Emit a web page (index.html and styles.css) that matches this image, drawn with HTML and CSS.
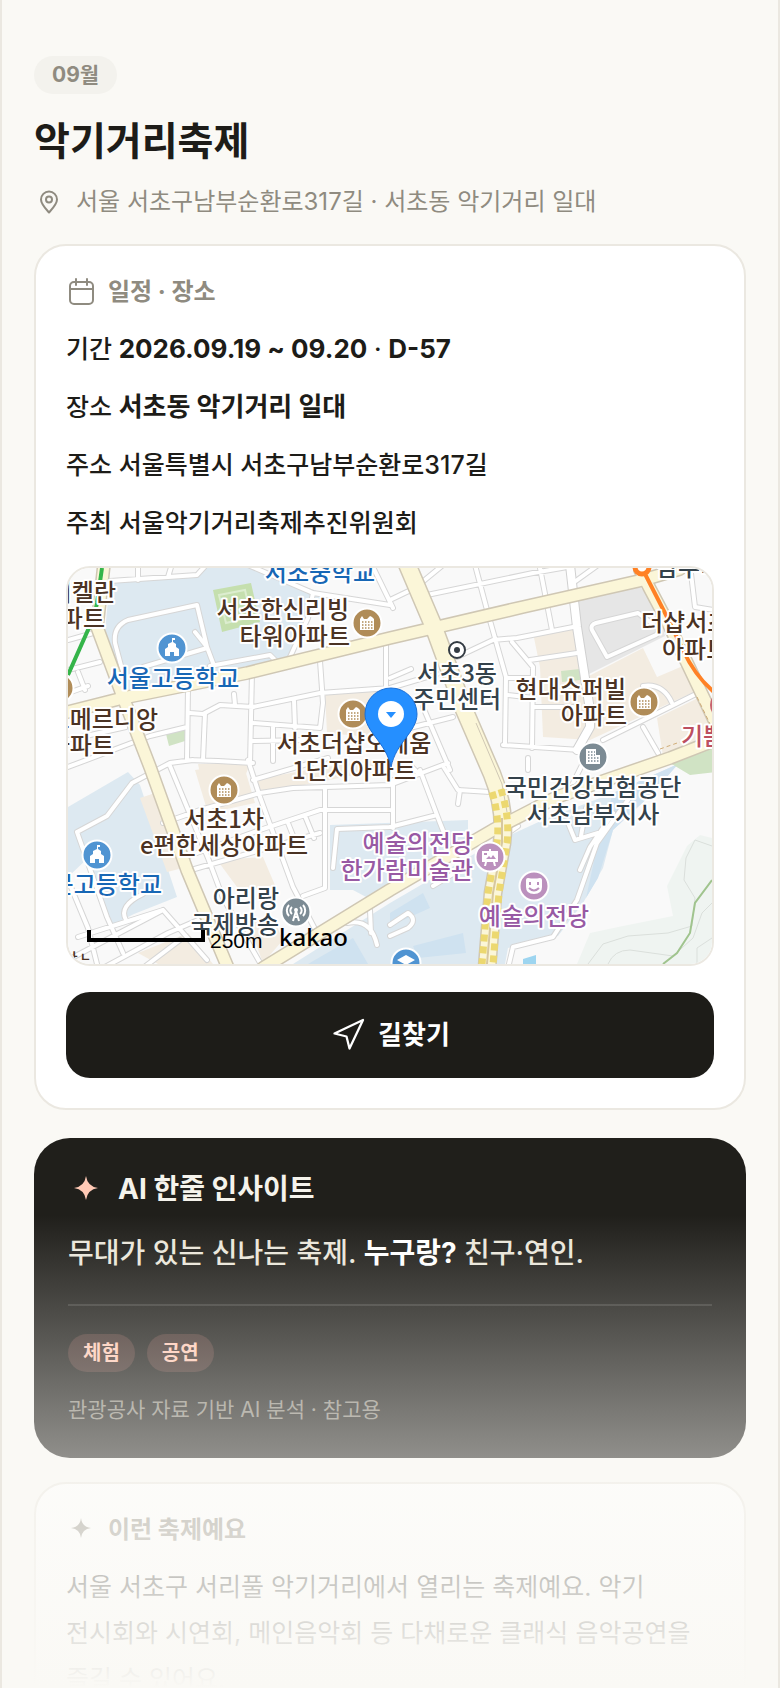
FILE: index.html
```html
<!DOCTYPE html>
<html lang="ko">
<head>
    <meta charset="UTF-8">
    <meta name="viewport" content="width=device-width, initial-scale=1">
    <title>악기거리축제</title>
    <link rel="stylesheet" href="styles.css">
</head>

<body>
    <main class="page">
        <header class="festival-header">
            <span class="month-chip">09월</span>
            <h1>악기거리축제</h1>
            <p class="address">
                <svg class="icon" viewBox="0 0 30 30" aria-hidden="true">
                    <path d="M15 25.500C11 21 7 17 7 12.500a8 8 0 0 1 16 0C23 17 19 21 15 25.500z"></path>
                    <circle cx="15" cy="12.500" r="3"></circle>
                </svg>
                서울 서초구남부순환로317길 · 서초동 악기거리 일대
            </p>
        </header>

        <section class="card">
            <h2 class="card-title">
                <svg class="icon" viewBox="0 0 30 30" aria-hidden="true">
                    <rect x="4" y="5" width="23" height="22" rx="4"></rect>
                    <path d="M4 12h23M10 2v6M21 2v6"></path>
                </svg>
                일정 · 장소
            </h2>
            <ul class="info-list">
                <li>기간 <b>2026.09.19 ~ 09.20</b> · <b>D-57</b></li>
                <li>장소 <b>서초동 악기거리 일대</b></li>
                <li>주소 서울특별시 서초구남부순환로317길</li>
                <li>주최 서울악기거리축제추진위원회</li>
            </ul>

            <div class="map">
                <svg viewBox="0 0 644 396" preserveAspectRatio="xMidYMid slice">
                    <defs>
                        <path id="lanes" d="M42 13L129 7L139-4M70 12V0M100 9L104-4M55 105L47 75Q45 58 60 52L129 37L139 79L145 95M75 99L139 80M127 64L139 79M142 98L202 87L207 92M180-3L245 25L322 37M222 89L240 50L245 25M304-3L325 40M0 72L29 64M0 102L32 94M10 104L17 122M0 125L20 118M120 120L119 192L150 193L185 195M184 104L182 196M252 93L255 135L252 160M122 145L135 146L152 137L185 139L252 125L322 120M137 145L135 192M166 126L167 137M185 155L252 160M185 173L240 172M226 132L227 160M205 158V193M318 72V120M0 199L82 168L119 159M0 172L58 159M9 264L39 248L64 215L102 195L125 192M9 264L39 349L55 385M0 312L20 360L30 400M10 369L95 342L139 392M58 352Q50 338 75 326M102 198L140 290L155 330L195 400M180 192L192 229L225 319L249 365M95 255L132 242L192 225L225 220L322 217M115 290L192 262L252 242L322 242M257 219V320L235 328M265 300L269 261L322 259M123 302L252 265M185 212L260 190M237 248L246 270M220 255L228 275M279 355Q303 350 309 377M302 342L303 365M35 400L100 365L130 352M75 400L112 372M0 392L95 342M322 32L347 20L375-3M359 27L465 5L505-2M407-3L419 42L438 109L437 175M472 0L484 62M389 89L425 72L449 70L505 59M444 74L465 99L464 180M462 92L509 85M440 110H465M440 127L466 130M435 177L512 182M467 139H505M535 172L632 124M575 159L590 185M524 62Q522 57 528 55L570 45L590 60Q592 64 588 67L539 89ZM322 110L343 101M322 120L369 106M322 165L385 149M355 139L382 202M604 135Q595 115 575 118M622-3L627 39L646 42M505 15L530-3M352 202L372 255L380 275M375 198L390 222L422 224M392 222L390 236M322 259L369 247M325 212V260M322 217L380 195M340 195L350 205M460 190V202M520 185L500 225M512 302L522 279L545 245M500 255L507 272L530 265M518 240L513 268M565 225L529 275L509 332L485 369L445 379L440 400M322 357L340 345Q350 352 340 360L322 368M365 318L395 300M440 265L450 258"></path>
                        <path id="wide-lane" d="M502-3L509 59L522 142L522 159L509 182"></path>
                        <path id="avenues" d="M36-4L29 59L55 129L82 199L119 302L160 400M0 144L55 130L179 105L322 70L455 39L575 12L612 1M195 400L322 322L425 262L489 229L602 190L648 172M572 2L600 55L650 160"></path>
                        <path id="boulevard" d="M339-4L365 57L395 139L424 206Q438 240 434 275L425 325L419 400"></path>
                        <g id="apartment">
                            <circle r="14.500" fill="#b08c58" stroke="#fff" stroke-width="2"></circle>
                            <path d="M-7 7V-4L-5-7L-3-4L0-4L3-7L5-6L7-4V7z" fill="#fff"></path>
                            <path d="M-5-1H6M-5 2H6M-5 5H6" stroke="#b08c58" stroke-width="1.500" stroke-dasharray="1.500 1.500"></path>
                        </g>
                        <g id="school">
                            <circle r="14.500" fill="#5094d2" stroke="#fff" stroke-width="2"></circle>
                            <path d="M-7 8V1L-4-1V-4L0-6V-10H3V-8H1V-6L4-4V-1L7 1V8H2V4H-2V8z" fill="#fff"></path>
                        </g>
                    </defs>

                    <rect width="644" height="396" fill="#f9f9f9"></rect>

                    <!-- blocks -->
                    <g fill="#dde9f1">
                        <path d="M42 12L129 6L139 0H182L255 25L222 88L180 102L65 128L53 122L37 64z"></path>
                        <path d="M0 239L60 204L72 217L109 329L66 346L42 358L20 290L0 309z"></path>
                        <path d="M262 257L400 252V280L300 330L285 322H262z"></path>
                        <path d="M225 396L322 335L425 275L475 252L545 225L610 196L585 225L545 262L535 300L515 335L490 368L440 380L437 396z"></path>
                    </g>
                    <g fill="#cfe2f0">
                        <path d="M322 345L355 325L362 340L322 358zM240 396L285 370L300 396zM345 378L395 365L398 385L350 390z"></path>
                        <path d="M545 225L610 196L585 225L545 262L530 310L518 330L530 275z"></path>
                    </g>
                    <g fill="#f3ece1">
                        <path d="M72 230L87 225L115 300L99 304zM127 202L175 195L187 235L140 245zM149 292L195 289L209 322L169 319zM179 352L205 350L215 372L195 395zM70 385L120 365L145 396H90z"></path>
                        <path d="M257 125L315 120L312 170L259 165zM130 196H182L178 206H132zM185 212L250 200L322 190V200L190 226z"></path>
                        <path d="M465 65L505 59L519 109L575 80L589 109L622 95L630 122L522 172L475 169L472 99zM589 150L630 130L644 160L644 172L595 188z"></path>
                    </g>
                    <path d="M507 30L572 19L589 35L597 68L519 107z" fill="#e6e6e6"></path>
                    <path d="M145 22L183 15L192 54L154 64z" fill="#c5dfae"></path>
                    <path d="M151 27L177 22L183 49L158 55z" fill="none" stroke="#dcedcf" stroke-width="2"></path>
                    <path d="M98 166L117 161V173L101 178zM493 103L512 101V112L494 114zM602 195L648 172V204L622 207z" fill="#d0e3c4"></path>

                    <!-- hill -->
                    <path d="M632 267L644 270V396H509L522 365L555 358L605 348L599 318L619 278z" fill="#eff4f1"></path>
                    <path d="M644 278L627 272L618 290L616 312L627 330L624 358L600 365L560 368L535 376L520 396M540 396Q546 382 562 382L605 388L625 370L634 345L644 335M629 396V380L644 370" fill="none" stroke="#dadfdb" stroke-width="1"></path>
                    <path d="M644 312L627 335L622 365L609 385L595 396" fill="none" stroke="#a0c48e" stroke-width="2"></path>
                    <path d="M455 391L468 387V396H455z" fill="#9dd5f0"></path>

                    <!-- streets -->
                    <g fill="none" stroke-linejoin="round" stroke-linecap="round">
                        <use href="#lanes" stroke="#d6d6d6" stroke-width="6"></use>
                        <use href="#wide-lane" stroke="#d0d0d0" stroke-width="10"></use>
                        <use href="#lanes" stroke="#fff" stroke-width="4"></use>
                        <use href="#wide-lane" stroke="#fff" stroke-width="8"></use>
                        <use href="#avenues" stroke="#cfc7b4" stroke-width="14"></use>
                        <use href="#boulevard" stroke="#cfc7b4" stroke-width="19"></use>
                        <use href="#avenues" stroke="#fbf6d8" stroke-width="11"></use>
                        <use href="#boulevard" stroke="#fbf6d8" stroke-width="16"></use>
                    </g>
                    <path d="M408 155L434 216L439 244" fill="none" stroke="#cfc7b4" stroke-width="1"></path>
                    <g fill="none" stroke="#ecd870" stroke-width="7" stroke-dasharray="7 5">
                        <path d="M424 224Q432 250 429 275L420 325L414 396"></path>
                        <path d="M433 221Q442 250 439 275L431 325L425 396"></path>
                    </g>
                    <path d="M434 250V275L425 325L419 396" fill="none" stroke="#d6c7a0" stroke-width="2"></path>
                    <path d="M34 0L29 35Q26 52 20 62L0 107" fill="none" stroke="#35b54a" stroke-width="4"></path>
                    <path d="M574 0L599 49L615 82Q627 108 646 124" fill="none" stroke="#ff8125" stroke-width="4"></path>
                    <circle cx="574" cy="-1" r="7" fill="#fff" stroke="#ff8125" stroke-width="5"></circle>
                    <path d="M592 181L612 174M629 129L644 160" fill="none" stroke="#d0ad78" stroke-dasharray="4 3"></path>

                    <!-- places -->
                    <use href="#apartment" x="299" y="55"></use>
                    <use href="#apartment" x="285" y="146"></use>
                    <use href="#apartment" x="156" y="222"></use>
                    <use href="#apartment" x="576" y="134"></use>
                    <use href="#apartment" x="-9" y="120"></use>
                    <use href="#school" x="104" y="80"></use>
                    <use href="#school" x="29" y="287"></use>
                    <circle cx="656" cy="137" r="14" fill="#c8626e"></circle>
                    <g transform="translate(525 189)">
                        <circle r="14.500" fill="#7c8b94" stroke="#fff" stroke-width="2"></circle>
                        <path d="M-7 7V-8H3V-2H7V7z" fill="#fff"></path>
                        <path d="M-5-5H2M-5-2H2M-5 1H6M-5 4H6" stroke="#7c8b94" stroke-width="1.500" stroke-dasharray="1.500 1.500"></path>
                    </g>
                    <g transform="translate(228 344)" fill="none" stroke="#fff" stroke-width="2">
                        <circle r="14.500" fill="#7c8b94"></circle>
                        <path d="M-3 9L0-1L3 9M-2 5H2M-4 2a4.500 4.500 0 0 1 0-7M4 2a4.500 4.500 0 0 0 0-7M-7 4a8 8 0 0 1 0-11M7 4a8 8 0 0 0 0-11"></path>
                        <circle cy="-2" r="1"></circle>
                    </g>
                    <g transform="translate(422 289)">
                        <circle r="14.500" fill="#bb90bd" stroke="#fff" stroke-width="2"></circle>
                        <path d="M-8-6H-1V-8H1V-6H8V5H5L6 9H4L3 5H-3L-4 9H-6L-5 5H-8z" fill="#fff"></path>
                        <path d="M-4 2L-1-1L1 1L3-2L6 2zM-6-4H-3V-2H-6z" fill="#bb90bd"></path>
                    </g>
                    <g transform="translate(466 318)">
                        <circle r="14.500" fill="#bb90bd" stroke="#fff" stroke-width="2"></circle>
                        <path d="M-8-6Q-8-8-6-8Q0-7 6-8Q8-8 8-6V1Q8 8 0 8T-8 1z" fill="#fff"></path>
                        <path d="M-5 2Q0 7 5 2" fill="none" stroke="#bb90bd" stroke-width="2"></path>
                        <path d="M-5-4H-3V-1H-5zM3-4H5V-1H3z" fill="#bb90bd"></path>
                    </g>
                    <g transform="translate(338 395)">
                        <circle r="14.500" fill="#5094d2" stroke="#fff" stroke-width="2"></circle>
                        <path d="M-9-3L0-8L9-3L0 2zM-5 1L0 4L5 1V6H-5z" fill="#fff"></path>
                    </g>
                    <g transform="translate(389 82)">
                        <circle r="8" fill="#fff" stroke="#343c44" stroke-width="2"></circle>
                        <circle r="3" fill="#343c44"></circle>
                    </g>

                    <g class="labels labels-apartment">
                        <text class="end" x="48" y="33">미켈란</text>
                        <text class="end" x="37" y="59">아파트</text>
                        <text class="end" x="281" y="50">서초한신리빙</text>
                        <text class="end" x="282" y="77">타워아파트</text>
                        <text class="end" x="90" y="160">르메르디앙</text>
                        <text class="end" x="46" y="186">아파트</text>
                        <text class="mid" x="286" y="184">서초더샵오데움</text>
                        <text class="mid" x="286" y="211">1단지아파트</text>
                        <text class="end" x="558" y="130">현대슈퍼빌</text>
                        <text class="end" x="559" y="156">아파트</text>
                        <text x="573" y="63">더샵서초</text>
                        <text x="594" y="90">아파트</text>
                        <text class="mid" x="156" y="260">서초1차</text>
                        <text class="mid" x="156" y="286">e편한세상아파트</text>
                    </g>
                    <g class="labels labels-school">
                        <text class="mid" x="252" y="13">서초중학교</text>
                        <text class="mid" x="105" y="119">서울고등학교</text>
                        <text class="end" x="94" y="325">서문고등학교</text>
                    </g>
                    <g class="labels labels-office">
                        <text class="mid" x="389" y="114">서초3동</text>
                        <text class="mid" x="389" y="140">주민센터</text>
                        <text x="588" y="8">남부터</text>
                        <text class="mid" x="525" y="228">국민건강보험공단</text>
                        <text class="mid" x="525" y="255">서초남부지사</text>
                        <text class="end" x="211" y="339">아리랑</text>
                        <text class="end" x="211" y="365">국제방송</text>
                    </g>
                    <g class="labels labels-culture">
                        <text class="end" x="405" y="284">예술의전당</text>
                        <text class="end" x="405" y="311">한가람미술관</text>
                        <text class="mid" x="466" y="357">예술의전당</text>
                    </g>
                    <text class="labels labels-church" x="613" y="177">기쁨</text>
                    <text class="clipped" x="1" y="394">ㅏㄴ</text>

                    <!-- festival pin -->
                    <path d="M323 199C318 174 297 164 297 146a26 26 0 0 1 52 0C349 164 328 174 323 199z" fill="#258fff" stroke="#1b6fd6" stroke-width="1"></path>
                    <circle cx="323" cy="146" r="13" fill="#fff"></circle>
                    <path d="M318 144H328L323 150z" fill="#258fff"></path>

                    <path d="M21 362V372H135V362" fill="none" stroke="#000" stroke-width="4"></path>
                    <text class="scale" x="142" y="380">250m</text>
                    <text class="kakao" x="211" y="378">kakao</text>
                </svg>
            </div>

            <button class="route-button" type="button">
                <svg viewBox="0 0 24 24" aria-hidden="true">
                    <path d="M3 11L22 2L13 21L11 13L3 11z"></path>
                </svg>
                길찾기
            </button>
        </section>

        <section class="insight">
            <h2>
                <svg viewBox="0 0 36 36" aria-hidden="true">
                    <path d="M18 5Q19.500 15.500 30 17Q19.500 18.500 18 29Q16.500 18.500 6 17Q16.500 15.500 18 5z"></path>
                </svg>
                AI 한줄 인사이트
            </h2>
            <p class="insight-text">무대가 있는 신나는 축제. <b>누구랑?</b> 친구·연인.</p>
            <div class="tags">
                <span>체험</span>
                <span>공연</span>
            </div>
            <p class="insight-note">관광공사 자료 기반 AI 분석 · 참고용</p>
        </section>

        <section class="card">
            <h2 class="card-title">
                <svg class="icon icon-solid" viewBox="0 0 30 30" aria-hidden="true">
                    <path d="M15 3Q16 12 25 13Q16 14 15 23Q14 14 5 13Q14 12 15 3z"></path>
                </svg>
                이런 축제예요
            </h2>
            <p class="description">서울 서초구 서리풀 악기거리에서 열리는 축제예요. 악기 전시회와 시연회, 메인음악회 등 다채로운 클래식 음악공연을 즐길 수 있어요.</p>
        </section>

        <div class="fade"></div>
    </main>
</body>
</html>
```
FILE: styles.css
```css
:root {
    --paper: #faf9f5;
    --line: #ebe8e1;
    --ink: #1d1c18;
    --muted: #8f8b80;
    --peach: #ffc9b5;
}

* {
    box-sizing: border-box;
}

body {
    margin: 0;
    background: var(--paper);
    color: var(--ink);
    font-family: Inter, "Noto Sans CJK KR", sans-serif;
    font-weight: 500;
}

h1, h2, p, ul {
    margin: 0;
    padding: 0;
}

.page {
    position: relative;
    height: 100vh;
    overflow: hidden;
    padding: 56px 32px 0;
    border: solid var(--line);
    border-width: 0 2px;
}

/* Header */
.festival-header {
    display: flex;
    flex-direction: column;
    align-items: flex-start;
    margin-bottom: 24px;
}

.month-chip {
    padding: 0 18px;
    border-radius: 20px;
    background: #f3f2ed;
    color: var(--muted);
    font-size: 21px;
    font-weight: 700;
    line-height: 38px;
}

h1 {
    margin-top: 20px;
    font-size: 39px;
    font-weight: 700;
    line-height: 54px;
}

.address {
    display: flex;
    align-items: center;
    gap: 12px;
    margin-top: 16px;
    color: var(--muted);
    font-size: 24px;
    font-weight: 400;
    line-height: 36px;
}

.icon {
    flex: none;
    width: 30px;
    height: 30px;
    fill: none;
    stroke: currentColor;
    stroke-width: 2;
    stroke-linecap: round;
    stroke-linejoin: round;
}

.icon-solid {
    fill: currentColor;
    stroke: none;
}

/* White cards */
.card {
    padding: 28px 30px 30px;
    border: 2px solid var(--line);
    border-radius: 32px;
    background: #fff;
}

.card-title {
    display: flex;
    align-items: center;
    gap: 12px;
    color: var(--muted);
    font-size: 24px;
    font-weight: 700;
    line-height: 36px;
}

.info-list {
    margin-top: 16px;
    list-style: none;
    font-size: 25px;
    line-height: 46px;
}

.info-list b {
    font-size: 26px;
    line-height: 36px;
}

.info-list li + li {
    margin-top: 12px;
}

/* Map */
.map {
    height: 400px;
    margin-top: 20px;
    overflow: hidden;
    border: 2px solid var(--line);
    border-radius: 24px;
}

.map svg {
    display: block;
    width: 100%;
    height: 100%;
}

.labels {
    font-family: "Noto Sans CJK KR", sans-serif;
    font-size: 24px;
    font-weight: 500;
    stroke: #fff;
    stroke-width: 4px;
    stroke-linejoin: round;
    paint-order: stroke;
}

.labels-apartment { fill: #4b3324; }
.labels-school { fill: #1767b5; }
.labels-office { fill: #34424b; }
.labels-culture { fill: #985aa4; }
.labels-church { fill: #bd4f60; }

.mid { text-anchor: middle; }
.end { text-anchor: end; }

.clipped {
    fill: #4b3324;
    font-size: 12px;
    font-weight: 700;
}

.scale {
    font-family: "Liberation Sans", sans-serif;
    font-size: 21px;
    font-weight: 400;
}

.kakao {
    font-family: "Noto Sans", sans-serif;
    font-size: 24px;
    font-weight: 500;
}

.route-button {
    display: flex;
    align-items: center;
    justify-content: center;
    gap: 12px;
    width: 100%;
    height: 86px;
    margin-top: 26px;
    border: 0;
    border-radius: 24px;
    background: var(--ink);
    color: #fff;
    font: inherit;
    font-size: 26px;
    font-weight: 700;
    line-height: 36px;
    cursor: pointer;
}

.route-button svg {
    width: 36px;
    height: 36px;
    fill: none;
    stroke: currentColor;
    stroke-width: 1.5;
    stroke-linejoin: round;
}

/* AI insight */
.insight {
    margin: 28px 0 24px;
    padding: 32px 34px;
    border-radius: 36px;
    background: #201f1b;
}

.insight h2 {
    display: flex;
    align-items: center;
    gap: 14px;
    color: #f5f3ec;
    font-size: 28px;
    font-weight: 700;
    line-height: 38px;
}

.insight h2 svg {
    width: 36px;
    height: 36px;
    fill: var(--peach);
}

.insight-text {
    margin-top: 20px;
    padding-bottom: 26px;
    border-bottom: 2px solid #3b3a36;
    color: #eae6da;
    font-size: 28px;
    line-height: 50px;
}

.insight-text b {
    color: #fff;
}

.tags {
    display: flex;
    gap: 12px;
    margin-top: 28px;
}

.tags span {
    padding: 0 15px;
    border-radius: 20px;
    background: #43322d;
    color: var(--peach);
    font-size: 20px;
    font-weight: 700;
    line-height: 38px;
}

.insight-note {
    margin-top: 22px;
    color: #8f8b80;
    font-size: 21px;
    font-weight: 400;
    line-height: 32px;
}

.description {
    margin-top: 16px;
    font-size: 25px;
    font-weight: 400;
    line-height: 46px;
    word-break: keep-all;
}

/* Fade to the page colour at the bottom of the screen */
.fade {
    position: absolute;
    right: -2px;
    bottom: 0;
    left: -2px;
    height: 28vh;
    background: linear-gradient(rgba(250, 249, 245, 0), var(--paper));
    pointer-events: none;
}
```
